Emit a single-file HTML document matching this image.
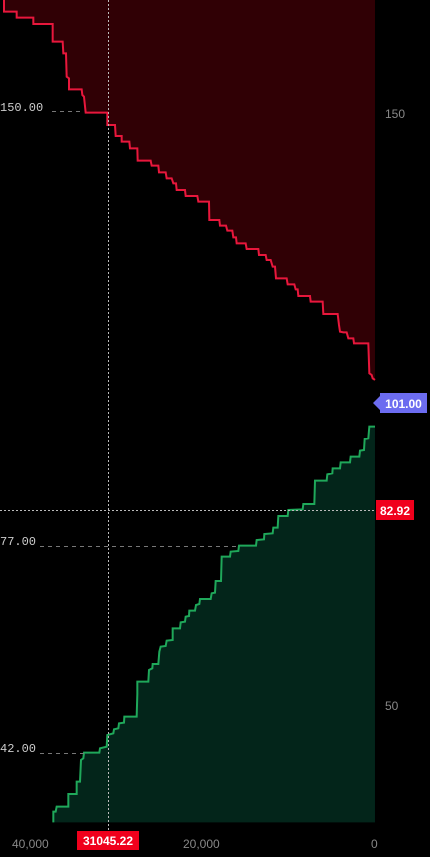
<!DOCTYPE html>
<html><head><meta charset="utf-8"><style>
html,body{margin:0;padding:0;background:#000;width:430px;height:857px;overflow:hidden}
svg{display:block}
text{font-family:"Liberation Sans",sans-serif}
.mono{font-family:"Liberation Mono",monospace}
</style></head><body>
<svg width="430" height="857" viewBox="0 0 430 857">
<g transform="scale(0.33333)">
<path d="M12,0 L12,35 L50,35 L50,53 L100,53 L100,72 L158,72 L158,125 L188,125 L190,160 L198,160 L200,230 L207,235 L207,268 L245,268 L247,285 L252,290 L257,338 L322,338 L322,375 L345,375 L347,408 L365,408 L365,425 L388,425 L390,445 L412,445 L413,482 L452,482 L455,497 L475,497 L477,517 L497,517 L500,535 L515,535 L520,550 L528,550 L530,570 L555,570 L557,588 L592,588 L595,605 L627,605 L628,660 L658,660 L660,677 L678,677 L682,692 L697,692 L700,712 L708,712 L710,730 L737,730 L740,747 L775,747 L777,765 L797,765 L800,780 L812,780 L818,800 L825,800 L828,835 L860,835 L863,853 L883,853 L887,868 L893,868 L895,888 L930,888 L932,905 L968,905 L970,942 L1013,942 L1017,975 L1020,995 L1030,997 L1040,997 L1045,1015 L1060,1015 L1062,1030 L1105,1030 L1108,1120 L1115,1125 L1118,1135 L1125,1140 L1125,0 Z" fill="#300005"/>
<path d="M12,0 L12,35 L50,35 L50,53 L100,53 L100,72 L158,72 L158,125 L188,125 L190,160 L198,160 L200,230 L207,235 L207,268 L245,268 L247,285 L252,290 L257,338 L322,338 L322,375 L345,375 L347,408 L365,408 L365,425 L388,425 L390,445 L412,445 L413,482 L452,482 L455,497 L475,497 L477,517 L497,517 L500,535 L515,535 L520,550 L528,550 L530,570 L555,570 L557,588 L592,588 L595,605 L627,605 L628,660 L658,660 L660,677 L678,677 L682,692 L697,692 L700,712 L708,712 L710,730 L737,730 L740,747 L775,747 L777,765 L797,765 L800,780 L812,780 L818,800 L825,800 L828,835 L860,835 L863,853 L883,853 L887,868 L893,868 L895,888 L930,888 L932,905 L968,905 L970,942 L1013,942 L1017,975 L1020,995 L1030,997 L1040,997 L1045,1015 L1060,1015 L1062,1030 L1105,1030 L1108,1120 L1115,1125 L1118,1135 L1125,1140" fill="none" stroke="#e8173c" stroke-width="6"/>
</g>
<g transform="translate(0,420) scale(0.33333)">
<path d="M160,1207 L160,1175 L167,1175 L170,1160 L205,1160 L205,1122 L230,1122 L230,1085 L240,1085 L243,1020 L250,1015 L252,998 L298,998 L300,985 L320,980 L322,945 L340,940 L342,928 L355,925 L357,910 L372,908 L373,890 L410,890 L412,822 L412,785 L445,785 L447,750 L457,745 L458,732 L475,732 L478,695 L482,680 L497,678 L500,662 L518,660 L518,625 L540,625 L542,607 L555,605 L557,590 L567,588 L568,572 L585,572 L588,555 L598,552 L600,537 L632,537 L635,520 L645,518 L647,483 L663,483 L665,410 L690,410 L692,395 L715,393 L717,377 L768,377 L770,360 L792,358 L793,342 L818,340 L820,323 L833,323 L835,288 L863,288 L865,270 L908,268 L910,252 L943,252 L945,182 L980,182 L982,163 L997,160 L998,145 L1020,145 L1022,127 L1050,127 L1052,110 L1078,110 L1080,92 L1092,90 L1094,57 L1105,55 L1108,20 L1125,20 L1125,1207 Z" fill="#03251a"/>
<path d="M160,1207 L160,1175 L167,1175 L170,1160 L205,1160 L205,1122 L230,1122 L230,1085 L240,1085 L243,1020 L250,1015 L252,998 L298,998 L300,985 L320,980 L322,945 L340,940 L342,928 L355,925 L357,910 L372,908 L373,890 L410,890 L412,822 L412,785 L445,785 L447,750 L457,745 L458,732 L475,732 L478,695 L482,680 L497,678 L500,662 L518,660 L518,625 L540,625 L542,607 L555,605 L557,590 L567,588 L568,572 L585,572 L588,555 L598,552 L600,537 L632,537 L635,520 L645,518 L647,483 L663,483 L665,410 L690,410 L692,395 L715,393 L717,377 L768,377 L770,360 L792,358 L793,342 L818,340 L820,323 L833,323 L835,288 L863,288 L865,270 L908,268 L910,252 L943,252 L945,182 L980,182 L982,163 L997,160 L998,145 L1020,145 L1022,127 L1050,127 L1052,110 L1078,110 L1080,92 L1092,90 L1094,57 L1105,55 L1108,20 L1125,20" fill="none" stroke="#1fa85a" stroke-width="6"/>
</g>
<!-- dashed price lines -->
<line x1="52" y1="111.5" x2="84" y2="111.5" stroke="#777" stroke-dasharray="4,4"/>
<line x1="40" y1="546.5" x2="240" y2="546.5" stroke="#777" stroke-dasharray="4,4"/>
<line x1="40" y1="753.5" x2="84" y2="753.5" stroke="#777" stroke-dasharray="4,4"/>
<text x="0" y="111" class="mono" font-size="12" fill="#ccc">150.00</text>
<text x="0" y="545" class="mono" font-size="12" fill="#ccc">77.00</text>
<text x="0" y="752" class="mono" font-size="12" fill="#ccc">42.00</text>
<!-- crosshair -->
<line x1="108.5" y1="0" x2="108.5" y2="830" stroke="#bbb" stroke-dasharray="2,2"/>
<line x1="0" y1="510.5" x2="376" y2="510.5" stroke="#bbb" stroke-dasharray="2,2"/>
<!-- axis labels -->
<text x="385" y="118" font-size="12" fill="#888">150</text>
<text x="385" y="710" font-size="12" fill="#888">50</text>
<text x="12" y="848" font-size="12" fill="#888">40,000</text>
<text x="183" y="848" font-size="12" fill="#888">20,000</text>
<text x="371" y="848" font-size="12" fill="#888">0</text>
<!-- tags -->
<path d="M373,403 L380,396 L380,393 L427,393 L427,413 L380,413 L380,410 Z" fill="#6c6cf0"/>
<text x="403.5" y="408" font-size="12" font-weight="bold" fill="#fff" text-anchor="middle">101.00</text>
<rect x="376" y="500" width="38" height="20" fill="#f0001c"/>
<text x="395" y="515" font-size="12" font-weight="bold" fill="#fff" text-anchor="middle">82.92</text>
<rect x="77" y="831" width="62" height="19" fill="#f0001c"/>
<text x="108" y="845" font-size="12" font-weight="bold" fill="#fff" text-anchor="middle">31045.22</text>
</svg>
</body></html>
